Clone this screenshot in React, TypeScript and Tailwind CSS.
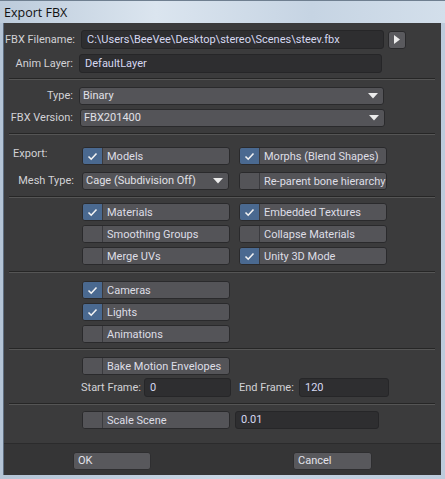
import React from 'react';

function Check() {
  return (
    <svg width="11" height="9" viewBox="0 0 11 9" className="block">
      <path d="M1.5 4.5 L4.2 7.2 L9.5 1.5" fill="none" stroke="#f2f2f2" strokeWidth="1.6" />
    </svg>
  );
}

function Toggle({ label, on = false, w = 'w-[148px]' }: { label: string; on?: boolean; w?: string }) {
  return (
    <div
      className={`${w} h-[18px] flex rounded-[3px] border border-[#2a2a2c] bg-[#545458] overflow-hidden shrink-0`}
    >
      <div
        className={`w-[20px] h-full shrink-0 flex items-center justify-center border-r border-[#3a3a3e] ${
          on ? 'bg-[#4a6990]' : 'bg-[#545458]'
        }`}
      >
        {on && <Check />}
      </div>
      <div className="pl-[4px] flex items-center text-[#dedee6] leading-none">{label}</div>
    </div>
  );
}

function Dropdown({ value, w }: { value: string; w: string }) {
  return (
    <div
      className={`${w} h-[18px] flex items-center justify-between rounded-[3px] border border-[#2a2a2c] bg-[#545458] pl-[3px] pr-[5px] text-[#e0e0e6] shrink-0`}
    >
      <span>{value}</span>
      <svg width="10" height="6" viewBox="0 0 10 6">
        <path d="M0 0 H10 L5 5.5 Z" fill="#ececec" />
      </svg>
    </div>
  );
}

function Field({ value, w, h = 'h-[19px]' }: { value: string; w: string; h?: string }) {
  return (
    <div
      className={`${w} ${h} flex items-center rounded-[3px] border border-[#262628] bg-[#2e2e30] pl-[5px] text-[#d6d8f0] shrink-0`}
    >
      {value}
    </div>
  );
}

function Sep({ mt }: { mt: string }) {
  return (
    <div className={`${mt} ml-[5px] w-[426px] flex flex-col shrink-0`}>
      <div className="h-px bg-[#262626]" />
      <div className="h-px bg-[#555555]" />
    </div>
  );
}

export default function App() {
  return (
    <div className="w-[445px] h-[479px] flex flex-col bg-[linear-gradient(90deg,#b4c4d6,#c9d6e4_50%,#bccbdc)] font-['Roboto',Arial,sans-serif] text-[11px] leading-[16px] whitespace-nowrap overflow-hidden">
      <div className="h-[23px] shrink-0 flex items-center pl-[4px] pt-[1px] border-t border-[#6f7f90] bg-[linear-gradient(90deg,#bccbdb,#dbe5ef_35%,#c6d4e3_70%,#d3dfeb)] text-[#111] text-[12.5px] font-['Open_Sans',sans-serif]">
        Export FBX
      </div>
      <div className="ml-[3px] mr-[4px] mb-[4px] flex-1 flex flex-col bg-[#3b3b3c] border-l border-[#5d6d80]">
        <div className="flex-1 flex flex-col text-[#d2d2d6]">
          <div className="mt-[7px] flex items-center h-[19px]">
            <div className="w-[71px] shrink-0 text-right">FBX Filename:</div>
            <div className="ml-[6px]">
              <Field value="C:\Users\BeeVee\Desktop\stereo\Scenes\steev.fbx" w="w-[303px]" />
            </div>
            <div className="ml-[4px] w-[18px] h-[18px] rounded-[3px] border border-[#2a2a2c] bg-[#5a5a5e] flex items-center justify-center">
              <svg width="6" height="9" viewBox="0 0 6 9">
                <path d="M0 0 L6 4.5 L0 9 Z" fill="#ececec" />
              </svg>
            </div>
          </div>
          <div className="mt-[5px] flex items-center h-[19px]">
            <div className="w-[69px] shrink-0 text-right">Anim Layer:</div>
            <div className="ml-[6px]">
              <Field value="DefaultLayer" w="w-[303px]" />
            </div>
          </div>

          <Sep mt="mt-[5px]" />

          <div className="mt-[7px] flex items-center">
            <div className="w-[69px] shrink-0 text-right">Type:</div>
            <div className="ml-[6px]">
              <Dropdown value="Binary" w="w-[305px]" />
            </div>
          </div>
          <div className="mt-[4px] flex items-center">
            <div className="w-[69px] shrink-0 text-right">FBX Version:</div>
            <div className="ml-[7px]">
              <Dropdown value="FBX201400" w="w-[305px]" />
            </div>
          </div>

          <Sep mt="mt-[6px]" />

          <div className="mt-[12px] flex items-start">
            <div className="w-[77px] shrink-0 pl-[9px] -mt-[1px]">Export:</div>
            <div className="ml-px flex gap-[9px]">
              <Toggle label="Models" on />
              <Toggle label="Morphs (Blend Shapes)" on />
            </div>
          </div>
          <div className="mt-[7px] flex items-center">
            <div className="w-[70px] shrink-0 text-right">Mesh Type:</div>
            <div className="ml-[8px]">
              <Dropdown value="Cage (Subdivision Off)" w="w-[147px]" />
            </div>
            <div className="ml-[10px]">
              <Toggle label="Re-parent bone hierarchy" />
            </div>
          </div>

          <Sep mt="mt-[6px]" />

          <div className="mt-[5px] ml-[78px] grid grid-cols-[148px_148px] gap-x-[9px] gap-y-[4px]">
            <Toggle label="Materials" on />
            <Toggle label="Embedded Textures" on />
            <Toggle label="Smoothing Groups" />
            <Toggle label="Collapse Materials" />
            <Toggle label="Merge UVs" />
            <Toggle label="Unity 3D Mode" on />
          </div>

          <Sep mt="mt-[6px]" />

          <div className="mt-[8px] ml-[78px] flex flex-col gap-[4px]">
            <Toggle label="Cameras" on />
            <Toggle label="Lights" on />
            <Toggle label="Animations" />
          </div>

          <Sep mt="mt-[5px]" />

          <div className="mt-[7px] ml-[78px]">
            <Toggle label="Bake Motion Envelopes" />
          </div>
          <div className="mt-[3px] ml-[77px] flex items-center">
            <div className="w-[63px] shrink-0">Start Frame:</div>
            <Field value="0" w="w-[87px]" />
            <div className="ml-[8px] w-[60px] shrink-0">End Frame:</div>
            <Field value="120" w="w-[90px]" />
          </div>

          <Sep mt="mt-[6px]" />

          <div className="mt-[6px] ml-[78px] flex items-center">
            <Toggle label="Scale Scene" />
            <div className="ml-[5px]">
              <Field value="0.01" w="w-[144px]" h="h-[18px]" />
            </div>
          </div>
        </div>

        <div className="h-[32px] shrink-0 border-t border-[#2b2b2c] bg-[#353536] flex items-start pt-[8px]">
          <div className="ml-[69px] w-[78px] h-[18px] rounded-[3px] bg-[#58585c] border border-[#2e2e30] flex items-center pl-[4px] text-[#e2e2ea]">
            OK
          </div>
          <div className="ml-[142px] w-[79px] h-[18px] rounded-[3px] bg-[#58585c] border border-[#2e2e30] flex items-center pl-[4px] text-[#e2e2ea]">
            Cancel
          </div>
        </div>
      </div>
    </div>
  );
}
